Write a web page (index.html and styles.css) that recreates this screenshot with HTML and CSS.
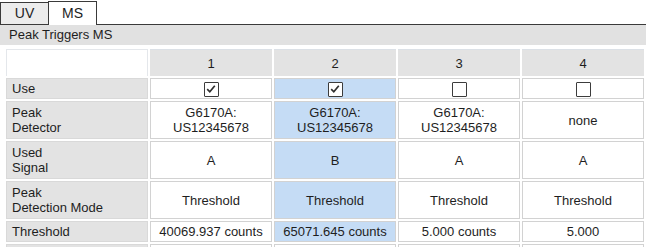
FILE: index.html
```html
<!DOCTYPE html>
<html lang="en">
<head>
    <meta charset="UTF-8">
    <title>Peak Triggers</title>
    <link rel="stylesheet" href="styles.css">
</head>
<body>
    <div class="tabs">
        <div class="tab">UV</div>
        <div class="tab active">MS</div>
        <div class="tab-fill"></div>
    </div>

    <div class="section-title">Peak Triggers MS</div>

    <div class="grid-wrap">
        <table class="grid">
            <colgroup>
                <col class="col-label">
                <col><col><col><col>
            </colgroup>
            <thead>
                <tr>
                    <th class="corner"></th>
                    <th>1</th>
                    <th>2</th>
                    <th>3</th>
                    <th>4</th>
                </tr>
            </thead>
            <tbody>
                <tr class="row-short">
                    <td class="label">Use</td>
                    <td><span class="check"><svg width="12" height="12" viewBox="0 0 12 12"><path d="M2.2 6.2 L4.8 8.8 L9.8 2.8" fill="none" stroke="#2e2e2e" stroke-width="1.7"/></svg></span></td>
                    <td class="selected"><span class="check"><svg width="12" height="12" viewBox="0 0 12 12"><path d="M2.2 6.2 L4.8 8.8 L9.8 2.8" fill="none" stroke="#2e2e2e" stroke-width="1.7"/></svg></span></td>
                    <td><span class="check"></span></td>
                    <td><span class="check"></span></td>
                </tr>
                <tr class="row-tall">
                    <td class="label">Peak<br>Detector</td>
                    <td>G6170A:<br>US12345678</td>
                    <td class="selected">G6170A:<br>US12345678</td>
                    <td>G6170A:<br>US12345678</td>
                    <td>none</td>
                </tr>
                <tr class="row-tall">
                    <td class="label">Used<br>Signal</td>
                    <td>A</td>
                    <td class="selected">B</td>
                    <td>A</td>
                    <td>A</td>
                </tr>
                <tr class="row-tall">
                    <td class="label">Peak<br>Detection Mode</td>
                    <td>Threshold</td>
                    <td class="selected">Threshold</td>
                    <td>Threshold</td>
                    <td>Threshold</td>
                </tr>
                <tr class="row-short">
                    <td class="label">Threshold</td>
                    <td>40069.937 counts</td>
                    <td class="selected">65071.645 counts</td>
                    <td>5.000 counts</td>
                    <td>5.000</td>
                </tr>
                <tr class="row-short">
                    <td class="label"></td>
                    <td></td>
                    <td></td>
                    <td></td>
                    <td></td>
                </tr>
            </tbody>
        </table>
    </div>
</body>
</html>
```

FILE: styles.css
```css
* {
    margin: 0;
    padding: 0;
    box-sizing: border-box;
}

body {
    font-family: 'Liberation Sans', Arial, sans-serif;
    font-size: 13px;
    color: #1e1e1e;
    background-color: #ffffff;
    width: 646px;
    height: 247px;
    overflow: hidden;
}

.tabs {
    display: flex;
    align-items: flex-end;
    height: 25px;
}

.tab {
    width: 49px;
    height: 23px;
    border: 1px solid #3a3a3a;
    background-color: #ececec;
    text-align: center;
    font-size: 14px;
    line-height: 20px;
}

.tab.active {
    height: 24px;
    margin-left: -1px;
    border-bottom: none;
    background-color: #ffffff;
    line-height: 22px;
}

.tab-fill {
    flex: 1;
    border-bottom: 1px solid #3a3a3a;
}

.section-title {
    height: 20px;
    line-height: 20px;
    padding-left: 9px;
    background-color: #e1e1e1;
}

.grid-wrap {
    height: 202px;
    overflow: hidden;
}

.grid {
    margin: 2px 0 0 4px;
    width: 642px;
    table-layout: fixed;
    border-collapse: separate;
    border-spacing: 2px;
}

.col-label {
    width: 142px;
}

.grid th {
    height: 27px;
    font-weight: normal;
    text-align: center;
    background-color: #e3e3e3;
    border-top: 1px solid #dbe0e6;
}

.grid th.corner {
    background-color: #ffffff;
    border: 1px solid #e4e7eb;
    border-bottom: none;
}

.grid td {
    border: 1px solid #d2d2d2;
    text-align: center;
    vertical-align: middle;
    line-height: 15px;
    white-space: nowrap;
}

.grid td.label {
    text-align: left;
    padding-left: 5px;
    background-color: #e3e3e3;
    border-color: #d9d9d9;
}

.grid td.selected {
    background-color: #c5dcf5;
}

.row-short td {
    height: 21px;
}

.row-tall td {
    height: 38px;
}

.check {
    display: inline-block;
    width: 15px;
    height: 15px;
    border: 1px solid #3c3c3c;
    border-radius: 1px;
    background-color: #ffffff;
    vertical-align: middle;
}

.check svg {
    display: block;
    margin: 0.5px 0 0 0.5px;
}
```
